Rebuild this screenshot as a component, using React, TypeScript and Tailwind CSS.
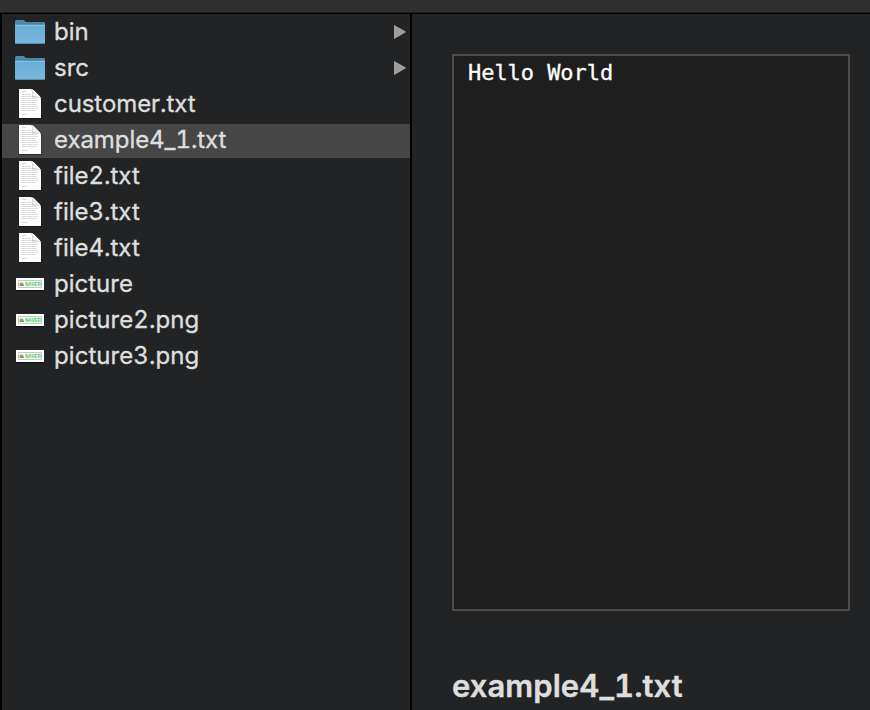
type Kind = "folder" | "text" | "image";

type Entry = { name: string; kind: Kind; selected?: boolean; tracking?: string };

const entries: Entry[] = [
  { name: "bin", kind: "folder" },
  { name: "src", kind: "folder" },
  { name: "customer.txt", kind: "text", tracking: "tracking-[-0.07px]" },
  { name: "example4_1.txt", kind: "text", selected: true, tracking: "tracking-[-0.07px]" },
  { name: "file2.txt", kind: "text" },
  { name: "file3.txt", kind: "text" },
  { name: "file4.txt", kind: "text" },
  { name: "picture", kind: "image" },
  { name: "picture2.png", kind: "image", tracking: "tracking-[0.06px]" },
  { name: "picture3.png", kind: "image", tracking: "tracking-[0.06px]" },
];

function FolderIcon() {
  return (
    <svg width="32" height="32" viewBox="0 0 32 32" className="block">
      <defs>
        <linearGradient id="folder" x1="0" y1="0" x2="0" y2="1">
          <stop offset="0" stopColor="#67add8" />
          <stop offset="1" stopColor="#7ab6d8" />
        </linearGradient>
      </defs>
      <path d="M1 5.5Q1 4 2.5 4H9Q10 4 10.8 5Q11.5 6 12.5 6H30Q31 6 31 7V12H1Z" fill="#4e88ab" />
      <path d="M1 8.3H31V26.5Q31 28 29.5 28H2.5Q1 28 1 26.5Z" fill="url(#folder)" />
      <path d="M1 8.2H31" stroke="#43799b" strokeWidth=".7" />
      <path d="M1.5 9.4H30.5" stroke="#86c6e8" />
      <path d="M1.8 27.5H30.2" stroke="#5591b4" />
    </svg>
  );
}

const textLines: [number, number][] = [
  [3, 4], [6, 9], [8, 13], [10, 15], [12, 16], [14, 14], [16, 15], [18, 16], [20, 16], [22, 14], [26, 5],
];

function TextIcon() {
  return (
    <svg width="32" height="32" viewBox="0 0 32 32" className="block overflow-visible">
      <path d="M4.5 2H19L27.4 9.5V31H4.5Z" fill="#000" opacity=".35" />
      <path d="M5 1H16.5Q18.5 1 20 2.5L25.5 8Q27 9.5 27 11.5V30H5Z" fill="#fdfdfd" />
      {textLines.map(([y, w]) => (
        <path key={y} d={`M8 ${y + 0.5}h${w}`} stroke="#d4d4d4" strokeWidth=".9" strokeDasharray="3 .4 2 .4" />
      ))}
      <path d="M18.3 2.5V9.5H26Z" fill="#b5b5b5" opacity=".8" />
      <path d="M17.5 1.2Q19 1.5 20 2.5L25.5 8Q26.6 9 26.8 10.4Q24.5 8.2 19 8.3Q19.5 3 17.5 1.2Z" fill="#f4f4f4" />
    </svg>
  );
}

function ImageIcon() {
  return (
    <svg width="32" height="32" viewBox="0 0 32 32" className="block">
      <path d="M2 11H30V23.3H2Z" fill="#000" opacity=".5" />
      <path d="M2 10H30V22H2Z" fill="#fff" />
      <path d="M4.5 12.5H27.5V19.5H4.5Z" fill="#f8fcf8" stroke="#c5c5c5" />
      <path d="M5.5 15.2Q7.3 13.6 9.2 15L10 18H5.5Z" fill="#aaa078" />
      <path d="M6 17.3H10" stroke="#857c60" />
      <text x="11" y="18" textLength="16" lengthAdjust="spacingAndGlyphs" fill="#3fce5c" className="font-['Liberation_Sans',sans-serif] text-[5.5px] font-bold">NAVER</text>
    </svg>
  );
}

function Disclosure() {
  return (
    <svg width="12" height="14" viewBox="0 0 12 14" className="-mt-0.5 ml-auto mr-1 block">
      <path d="M0 .5Q0 0 .7 .2L11.3 6.2Q12.3 7 11.3 7.6L.7 13.8Q0 14 0 13.5Z" fill="#9d9d9d" />
    </svg>
  );
}

const icons = { folder: FolderIcon, text: TextIcon, image: ImageIcon };

export default function App() {
  return (
    <div className="flex h-[710px] w-[870px] flex-col overflow-hidden bg-[#222325] font-['Inter','Liberation_Sans',sans-serif] tabular-nums text-[#dedede]">
      <header className="h-[13px] shrink-0 border-b border-[#1c1c1d] bg-[#2e2f31]" />
      <main className="flex min-h-0 flex-1 border-t border-black">
        <nav className="w-[412px] shrink-0 border-l-2 border-r-2 border-black">
          {entries.map(({ name, kind, selected, tracking = "" }) => {
            const Icon = icons[kind];
            return (
              <div
                key={name}
                className={`mt-0.5 flex h-[34px] items-center pl-3 ${selected ? "bg-[#464646]" : ""}`}
              >
                <div className="-mt-0.5"><Icon /></div>
                <span className={`-mt-0.5 ml-2 whitespace-nowrap text-2xl leading-[34px] [-webkit-text-stroke:0.35px_#dedede] ${tracking}`}>{name}</span>
                {kind === "folder" && <Disclosure />}
              </div>
            );
          })}
        </nav>
        <section className="flex-1 pl-10 pt-10">
          <pre className="h-[557px] w-[398px] border-2 border-[#4c4c4c] bg-[#1e1e1e] pl-3.5 pt-1 font-['DejaVu_Sans_Mono',monospace] text-[22px] leading-[26px] tracking-[-0.05px] text-white [-webkit-text-stroke:0.3px_white]">Hello World</pre>
          <h1 className="mt-[55px] whitespace-nowrap text-[31px] font-semibold leading-10 tracking-[0.07px] [-webkit-text-stroke:0.4px_#dedede]">example4_1.txt</h1>
        </section>
      </main>
    </div>
  );
}
